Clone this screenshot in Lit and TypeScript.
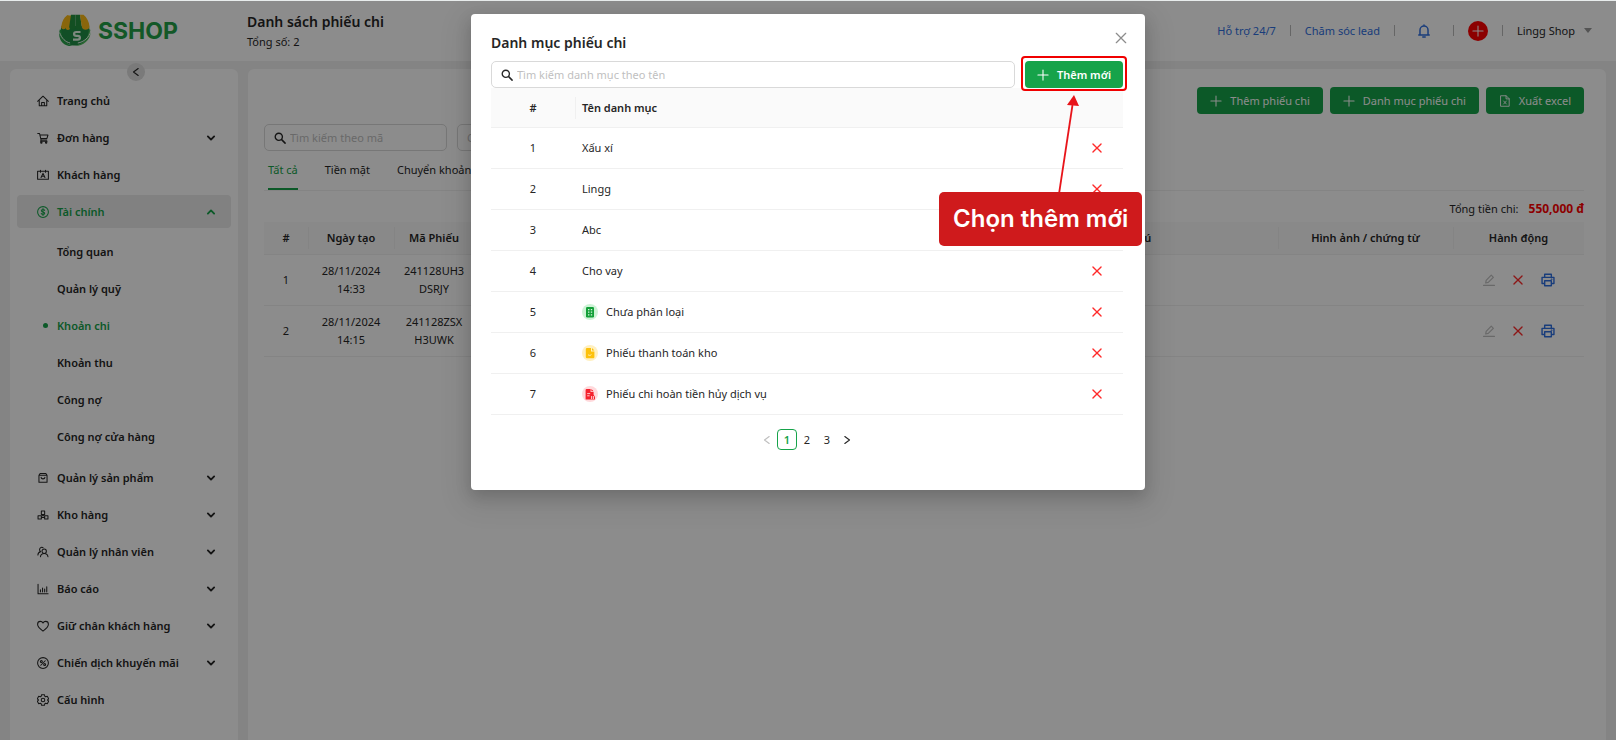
import { LitElement, html, css, svg, nothing } from "lit";
import { customElement } from "lit/decorators.js";

const stroke = (body: unknown, cls = "ic") =>
  html`<svg class=${cls} viewBox="0 0 16 16" fill="none" stroke="currentColor" stroke-width="1.4" stroke-linecap="round" stroke-linejoin="round" aria-hidden="true">${body}</svg>`;

const icons = {
  home: svg`<path d="M.8 8.400 8 1.600l7.200 6.800M3 7v7.200h10V7M6.200 14v-4h3.600v4"/>`,
  cart: svg`<path d="M1 2h2.400l2 8.600h7.600M4 4h10.600l-1.300 4.600H5M5.400 10.600l-.6 1.800h8.600"/><circle cx="5.800" cy="14" r="0.900"/><circle cx="12.200" cy="14" r="0.900"/>`,
  customer: svg`<path d="M.8 3h14.400v10.600H.8zM4.600 1.800v2.400M11.400 1.800v2.400M5.400 11.400 8 5.800l2.600 5.600M6.200 9.600h3.600"/>`,
  money: svg`<circle cx="8" cy="8" r="7.200"/><path d="M10.200 6c-.2-1-1.100-1.400-2.200-1.400S5.800 5.100 5.800 6.200C5.800 8.500 10.300 7.300 10.300 9.700c0 1-1 1.600-2.300 1.600s-2.300-.5-2.400-1.600M8 3.300v9.400"/>`,
  product: svg`<path d="M2.600 4.400h10.800v9.200H2.600zM2.600 4.400 4.200 2h7.600l1.600 2.400M5.400 7.200c.4 2.600 4.800 2.600 5.200 0"/>`,
  store: svg`<path d="M5.800 2.600h4.400v4.600H5.800zM1.400 9h4.400v4.400H1.400zM10.200 9h4.400v4.400h-4.400zM5.800 9h4.400M8 7.200V9M5.800 11.200h4.400"/>`,
  staff: svg`<circle cx="9.600" cy="7" r="2.900"/><path d="M4.600 14.400c.4-3 2.400-4.400 5-4.400s4.600 1.400 5 4.400M8.200 2.400C6.800 1 3.600 1.600 3.400 4.600c0 1.400.5 2.200 1.400 2.900C2.600 8.200 1.300 9.800 1.200 12"/>`,
  report: svg`<path d="M1.400 1.600v12.800h13.400M4.600 11.800V9M7.400 11.800V6.600M10.200 11.800V8M13 11.800V5"/>`,
  heart: svg`<path d="M8 14.800C4.400 12.200.8 9.400.8 5.700.8 3.300 2.600 1.800 4.500 1.800 6 1.800 7.300 2.600 8 4c.7-1.400 2-2.200 3.500-2.200 1.900 0 3.700 1.500 3.700 3.900 0 3.700-3.600 6.500-7.200 9.100z"/>`,
  promo: svg`<circle cx="8" cy="8" r="7.200"/><path d="m5 11 6-6"/><circle cx="5.800" cy="6" r="1.300"/><circle cx="10.200" cy="10" r="1.300"/>`,
  gear: svg`<path d="M6.100.9h3.800l.5 2.100 1.200.7 2.100-.6 1.900 3.200-1.500 1.400v.6l1.500 1.400-1.900 3.200-2.100-.6-1.200.7-.5 2.100H6.100L5.600 13l-1.200-.7-2.100.6L.4 9.700l1.500-1.400v-.6L.4 6.300l1.900-3.200 2.100.6L5.600 3z"/><circle cx="8" cy="8" r="2.400"/>`,
  down: svg`<path d="m3 5.500 5 5 5-5" stroke-width="3"/>`,
  up: svg`<path d="m3 10.500 5-5 5 5" stroke-width="3"/>`,
  left: svg`<path d="M11.500 2.500 4 8l7.500 5.500" stroke-width="1.800"/>`,
  right: svg`<path d="M4.500 2.500 12 8l-7.500 5.500" stroke-width="1.800"/>`,
  plus: svg`<path d="M8 1.200v13.600M1.200 8h13.600"/>`,
  cross: svg`<path d="m2.600 2.600 10.800 10.800M13.400 2.600 2.600 13.400" stroke-width="1.800"/>`,
  close: svg`<path d="m2.600 2.600 10.800 10.800M13.400 2.600 2.600 13.400"/>`,
  search: svg`<circle cx="6.400" cy="6.400" r="4.800" stroke-width="1.800"/><path d="m10.200 10.200 4.600 4.600" stroke-width="2"/>`,
  excel: svg`<path d="M2.600 1h7l4 4v10h-11zM9.400 1v4.200h4.200M6.200 8l3.600 4M9.800 8l-3.600 4" stroke-width="1.200"/>`,
  bell: svg`<path d="M2 12.600h12M3.400 12.400V7a4.600 4.600 0 0 1 9.200 0v5.400M8 2.200V1M6.600 14.800h2.800" stroke-width="1.700"/>`,
  edit: svg`<path d="M.8 15.200h14.400M3.600 12l.6-3.600L11 1.600 13.800 4.400 7 11.200z" stroke-width="1.600"/>`,
  print: svg`<path d="M4.200 5V1.400h7.600V5M4.200 12H1.200V5h13.600v7h-3M4.200 8.800h7.600v5.800H4.200zM11.800 7h.6" stroke-width="1.600"/>`,
};

type IconName = keyof typeof icons;
const icon = (name: IconName, cls = "ic") => stroke(icons[name], cls);

interface MenuEntry { label: string; icon: IconName; arrow?: boolean; children?: string[]; }

const menu: MenuEntry[] = [
  { label: "Trang chủ", icon: "home" },
  { label: "Đơn hàng", icon: "cart", arrow: true },
  { label: "Khách hàng", icon: "customer" },
  { label: "Tài chính", icon: "money", arrow: true, children: ["Tổng quan", "Quản lý quỹ", "Khoản chi", "Khoản thu", "Công nợ", "Công nợ cửa hàng"] },
  { label: "Quản lý sản phẩm", icon: "product", arrow: true },
  { label: "Kho hàng", icon: "store", arrow: true },
  { label: "Quản lý nhân viên", icon: "staff", arrow: true },
  { label: "Báo cáo", icon: "report", arrow: true },
  { label: "Giữ chân khách hàng", icon: "heart", arrow: true },
  { label: "Chiến dịch khuyến mãi", icon: "promo", arrow: true },
  { label: "Cấu hình", icon: "gear" },
];

const vouchers = [
  { day: "28/11/2024", time: "14:33", code: ["241128UH3", "DSRJY"] },
  { day: "28/11/2024", time: "14:15", code: ["241128ZSX", "H3UWK"] },
];

const categories: { name: string; badge?: "green" | "yellow" | "red" }[] = [
  { name: "Xấu xí" },
  { name: "Lingg" },
  { name: "Abc" },
  { name: "Cho vay" },
  { name: "Chưa phân loại", badge: "green" },
  { name: "Phiếu thanh toán kho", badge: "yellow" },
  { name: "Phiếu chi hoàn tiền hủy dịch vụ", badge: "red" },
];

const badges = {
  green: svg`<circle cx="8" cy="8" r="8" fill="#cdf3d5"/><rect x="4" y="3" width="8" height="10.400" rx="1.200" fill="#12a038"/><path d="M6 5.600h1.400M8.800 5.600h1.400M6 8.200h1.400M8.800 8.200h1.400M6 10.800h1.400M8.800 10.800h1.400" stroke="#d5f5dc" stroke-width="1.200"/>`,
  yellow: svg`<circle cx="8" cy="8" r="8" fill="#fff0c0"/><path d="M5 3h4v3.400h3.400V12a1.200 1.200 0 0 1-1.200 1.200H5A1.200 1.200 0 0 1 3.800 12V4.200A1.200 1.200 0 0 1 5 3zM10 3l2.400 2.400H10z" fill="#fdc10a"/><path d="M6 9.600c.8 1 2.400 1 3.400 0" stroke="#fff0c0" stroke-width="1" fill="none"/>`,
  red: svg`<circle cx="8" cy="8" r="8" fill="#ffd9dc"/><path d="M4.600 3h4v3h3v2.400L13 11v2.400H3.600V4A1 1 0 0 1 4.600 3zM9.400 3l2.200 2.200H9.400z" fill="#f5222d"/><path d="M5.200 7.600h3M5.200 9.800h2.400M9.600 10v3M11.400 10v3" stroke="#ffd9dc" stroke-width=".9"/>`,
};

@customElement("app-root")
export class AppRoot extends LitElement {
  static styles = css`
    :host { display: block; position: relative; min-height: 100vh; overflow: hidden; background: #f0f0f0; color: #262626; font: 11px/18px "Noto Sans", "Open Sans", sans-serif; }
    * { box-sizing: border-box; }
    button, input, select { font: inherit; color: inherit; margin: 0; }
    button { background: none; border: 0; padding: 0; }
    a { color: inherit; text-decoration: none; }
    ul { list-style: none; margin: 0; padding: 0; }
    h1, h2, p { margin: 0; }
    .ic { width: 12px; height: 12px; flex: none; display: block; }
    .ic-l { width: 14px; height: 14px; flex: none; display: block; }
    .ic-s { width: 10px; height: 10px; flex: none; display: block; }

    .page { display: flex; flex-direction: column; min-height: 100vh; }
    .top { display: flex; align-items: center; height: 61px; background: #fff; padding-right: 24px; }
    .brand { flex: none; width: 247px; padding-left: 58px; display: flex; align-items: center; gap: 6px; color: #24a148; font: 700 23px/32px Inter, sans-serif; }
    .logo { width: 34px; height: 33px; display: block; }
    .heading { flex: 1; }
    .title { font-size: 14px; line-height: 22px; font-weight: 600; }
    .tools { display: flex; align-items: center; }
    .tools a { color: #2f6fe0; }
    .sep { width: 1px; height: 11px; background: #bbb; margin: 0 14px; }
    .tools .bell { color: #2f6fe0; margin: 0 8px; }
    .add { width: 20px; height: 20px; border-radius: 50%; background: #ff0000; color: #fff; display: grid; place-items: center; }
    .user { display: flex; align-items: center; gap: 9px; }
    .caret { border: 4px solid transparent; border-top: 5px solid #999; border-bottom: 0; }

    .body { flex: 1; display: flex; gap: 10px; padding: 8px 10px 0; }
    .side { position: relative; flex: none; width: 228px; background: #fff; border-radius: 6px 6px 0 0; padding: 15px 7px; }
    .fold { position: absolute; top: -6px; left: 117px; width: 18px; height: 18px; border-radius: 50%; background: #dedede; display: grid; place-items: center; }
    .menu { display: flex; flex-direction: column; gap: 4px; }
    .item { display: flex; align-items: center; gap: 8px; width: 100%; height: 33px; padding: 0 15px 0 20px; border-radius: 4px; font-weight: 600; text-align: left; }
    .item span { flex: 1; }
    .open { background: #ebebeb; color: #16a34a; }
    .sub { display: flex; flex-direction: column; gap: 4px; padding: 7px 0 4px; }
    .dot { width: 5px; height: 5px; margin: 0 3px 0 6px; flex: none; border-radius: 50%; }
    .sub .item { gap: 6px; }
    .on { color: #16a34a; }
    .on .dot { background: #16a34a; }

    .main { flex: 1; min-width: 0; background: #fff; border-radius: 6px 6px 0 0; padding: 18px 22px 0 16px; }
    .actions { display: flex; justify-content: flex-end; gap: 7px; }
    .btn { display: flex; align-items: center; gap: 8px; height: 27px; padding: 0 13px; border-radius: 4px; background: #16a34a; color: #fff; }
    .filters { display: flex; gap: 10px; margin-top: 10px; }
    .box { display: flex; align-items: center; gap: 4px; height: 27px; padding: 0 9px; border: 1px solid #d9d9d9; border-radius: 5px; background: #fff; }
    .box input { flex: 1; min-width: 0; width: 100%; border: 0; padding: 0; outline: 0; background: none; }
    .box input::placeholder { color: #bfbfbf; opacity: 1; }
    .filters .box { width: 183px; }
    .pick { appearance: none; color: #bfbfbf; }
    .tabs { display: flex; gap: 27px; padding: 0 4px; border-bottom: 1px solid #f0f0f0; }
    .tab { height: 39px; border-bottom: 2px solid transparent; }
    .tab.on { border-color: #16a34a; }
    .sum { display: flex; justify-content: flex-end; gap: 10px; padding: 9px 0 4px; }
    .sum b { color: #ff0000; font-size: 12px; }
    table { width: 100%; border-collapse: separate; border-spacing: 0; table-layout: fixed; }
    th { font-weight: 600; background: #fafafa; border-bottom: 1px solid #f0f0f0; padding: 0; }
    td { border-bottom: 1px solid #f0f0f0; padding: 0; text-align: center; }
    th + th { background: linear-gradient(#f0f0f0, #f0f0f0) left center / 1px 22px no-repeat #fafafa; }
    .list th { height: 33px; }
    .list td { height: 51px; }
    .c44 { width: 44px; } .c86 { width: 86px; } .c80 { width: 80px; } .c294 { width: 294px; } .c175 { width: 175px; } .c131 { width: 131px; }
    .ops { display: flex; justify-content: center; gap: 17px; }
    .dim { color: #bfbfbf; } .red { color: #ff2a2a; } .blue { color: #2f6fe0; }

    .mask { position: absolute; inset: 0; background: rgba(0, 0, 0, .45); border-top: 1px solid #e8ecec; background-clip: padding-box; }
    .modal { position: absolute; top: 14px; left: 50%; width: 674px; margin-left: -337px; background: #fff; border-radius: 4px; padding: 18px 22px 40px 20px; box-shadow: 0 6px 16px rgba(0, 0, 0, .16), 0 9px 28px 8px rgba(0, 0, 0, .08); }
    .modal h2 { font-size: 14px; line-height: 22px; font-weight: 600; padding-bottom: 7px; }
    .close { position: absolute; top: 17px; right: 17px; color: #8c8c8c; }
    .find { display: flex; gap: 10px; }
    .find .box { flex: 1; }
    .new { position: relative; padding: 0 12px; font-weight: 600; }
    .frame { position: absolute; inset: -5px -4px -3px; border: 2px solid #f00000; border-radius: 4px; }
    .cats th { height: 40px; }
    .cats td { height: 41px; }
    .cats .name { text-align: left; padding-left: 7px; }
    .cats th:last-child { background: #fafafa; }
    .label { display: flex; align-items: center; gap: 8px; }
    .badge { width: 16px; height: 16px; display: block; }
    .c84 { width: 84px; } .c52 { width: 52px; }
    .cats .ops { color: #ff2a2a; }
    .pages { display: flex; justify-content: center; align-items: center; margin-top: 14px; }
    .pages button { width: 20px; height: 21px; display: grid; place-items: center; }
    .pages .cur { border: 1px solid #16a34a; border-radius: 4px; color: #16a34a; font-weight: 600; }

    .note { position: absolute; top: 178px; left: 468px; padding: 11px 14px; border-radius: 5px; background: #cf1a1c; color: #fff; font: 600 24px/32px Inter, sans-serif; white-space: nowrap; }
    .arrow { position: absolute; top: 80px; left: 584px; width: 26px; height: 100px; }
  `;

  private entry(m: MenuEntry) {
    return html`<li>
      <button class="item ${m.children ? "open" : ""}">${icon(m.icon)}<span>${m.label}</span>${m.arrow ? icon(m.children ? "up" : "down", "ic-s") : nothing}</button>
      ${m.children
        ? html`<ul class="sub">${m.children.map((c) => html`<li><a href="#" class="item ${c === "Khoản chi" ? "on" : ""}"><i class="dot"></i><span>${c}</span></a></li>`)}</ul>`
        : nothing}
    </li>`;
  }

  private header() {
    return html`<header class="top">
      <div class="brand">
        <svg class="logo" viewBox="0 0 34 33" aria-hidden="true">
          <path d="M3.500 12C1 20 5 31 15.500 31.500 26 32 33 23 31 12z" fill="#1f8f45"/>
          <path d="M1.800 15.500C-1 25 5.500 33 15 32 8.500 30.500 3.500 25 3.400 16z" fill="#2aa44c"/>
          <path d="M32 15c2.600 9-5.500 17-15 17C25 29.500 31 24 30.800 16z" fill="#4dbb5c"/>
          <path d="M1.600 18.500c2 6 6 9.500 10.500 10.500M32.800 17c-1.500 6.500-7 11-13 12" stroke="#fff" stroke-width=".9" fill="none"/>
          <path d="M9 1.500h5l-1 11c0 4-5.500 5-5.500.8 0 2.700-4.500 2.700-4.200-.8z" fill="#f9ba16"/>
          <path d="M9 1.500C6 3.500 4 7 3.300 12.500c0 3 4 3.500 4.500.8L10.500 1z" fill="#f9ba16"/>
          <path d="M13 .8h4.500v12c0 4-6.500 4-6.300 0z" fill="#23903f"/>
          <path d="M17.500.8H22l1.800 12c0 4-6.300 4-6.300 0z" fill="#23903f"/>
          <path d="M22 .8h3.500C29 3.500 31 8 31.500 12.500c0 4-7.400 4.400-7.700.3z" fill="#f9ba16"/>
          <path d="M22.500 18h-4.200c-3 0-3 3.800 0 3.800h1.400c3 0 3 3.800 0 3.800H15" fill="none" stroke="#e5f7e8" stroke-width="2.200"/>
        </svg>
        <span>SSHOP</span>
      </div>
      <div class="heading"><h1 class="title">Danh sách phiếu chi</h1><p>Tổng số: 2</p></div>
      <nav class="tools">
        <a href="#">Hỗ trợ 24/7</a><i class="sep"></i><a href="#">Chăm sóc lead</a><i class="sep"></i>
        <button class="bell" aria-label="Thông báo">${icon("bell", "ic-l")}</button><i class="sep"></i>
        <button class="add" aria-label="Thêm">${icon("plus")}</button><i class="sep"></i>
        <button class="user">Lingg Shop<i class="caret"></i></button>
      </nav>
    </header>`;
  }

  private content() {
    return html`<main class="main">
      <div class="actions">
        <button class="btn">${icon("plus")}Thêm phiếu chi</button>
        <button class="btn">${icon("plus")}Danh mục phiếu chi</button>
        <button class="btn">${icon("excel")}Xuất excel</button>
      </div>
      <div class="filters">
        <label class="box">${icon("search")}<input placeholder="Tìm kiếm theo mã" aria-label="Tìm kiếm theo mã" /></label>
        <select class="box pick" aria-label="Chọn"><option>Chọn</option></select>
      </div>
      <div class="tabs">
        <button class="tab on">Tất cả</button><button class="tab">Tiền mặt</button><button class="tab">Chuyển khoản</button>
      </div>
      <p class="sum">Tổng tiền chi: <b>550,000 đ</b></p>
      <table class="list">
        <colgroup><col class="c44" /><col class="c86" /><col class="c80" /><col /><col class="c294" /><col class="c175" /><col class="c131" /></colgroup>
        <thead><tr><th>#</th><th>Ngày tạo</th><th>Mã Phiếu</th><th></th><th>Ghi chú</th><th>Hình ảnh / chứng từ</th><th>Hành động</th></tr></thead>
        <tbody>
          ${vouchers.map((v, i) => html`<tr>
            <td>${i + 1}</td><td>${v.day}<br />${v.time}</td><td>${v.code[0]}<br />${v.code[1]}</td><td></td><td></td><td></td>
            <td><div class="ops">
              <button class="dim" aria-label="Sửa">${icon("edit")}</button>
              <button class="red" aria-label="Xóa">${icon("cross")}</button>
              <button class="blue" aria-label="In">${icon("print", "ic-l")}</button>
            </div></td>
          </tr>`)}
        </tbody>
      </table>
    </main>`;
  }

  private dialog() {
    return html`<section class="modal" role="dialog" aria-label="Danh mục phiếu chi">
      <h2>Danh mục phiếu chi</h2>
      <button class="close" aria-label="Đóng">${icon("close", "ic-l")}</button>
      <div class="find">
        <label class="box">${icon("search")}<input placeholder="Tìm kiếm danh mục theo tên" aria-label="Tìm kiếm danh mục theo tên" /></label>
        <button class="btn new">${icon("plus")}Thêm mới<i class="frame"></i></button>
      </div>
      <table class="cats">
        <colgroup><col class="c84" /><col /><col class="c52" /></colgroup>
        <thead><tr><th>#</th><th class="name">Tên danh mục</th><th></th></tr></thead>
        <tbody>
          ${categories.map((c, i) => html`<tr>
            <td>${i + 1}</td>
            <td class="name"><div class="label">${c.badge ? html`<svg class="badge" viewBox="0 0 16 16" aria-hidden="true">${badges[c.badge]}</svg>` : nothing}${c.name}</div></td>
            <td><div class="ops"><button aria-label="Xóa">${icon("cross")}</button></div></td>
          </tr>`)}
        </tbody>
      </table>
      <nav class="pages">
        <button class="dim" aria-label="Trang trước">${icon("left", "ic-s")}</button>
        <button class="cur">1</button><button>2</button><button>3</button>
        <button aria-label="Trang sau">${icon("right", "ic-s")}</button>
      </nav>
      <svg class="arrow" viewBox="0 0 26 100" aria-hidden="true"><path d="M4 100 17.500 11" stroke="#e8141a" stroke-width="1.800"/><path d="m19 1 5 11-12-1z" fill="#e8141a"/></svg>
      <div class="note">Chọn thêm mới</div>
    </section>`;
  }

  render() {
    return html`
      <div class="page">
        ${this.header()}
        <div class="body">
          <aside class="side">
            <button class="fold" aria-label="Thu gọn">${icon("left", "ic-s")}</button>
            <ul class="menu">${menu.map((m) => this.entry(m))}</ul>
          </aside>
          ${this.content()}
        </div>
      </div>
      <div class="mask"></div>
      ${this.dialog()}
    `;
  }
}
